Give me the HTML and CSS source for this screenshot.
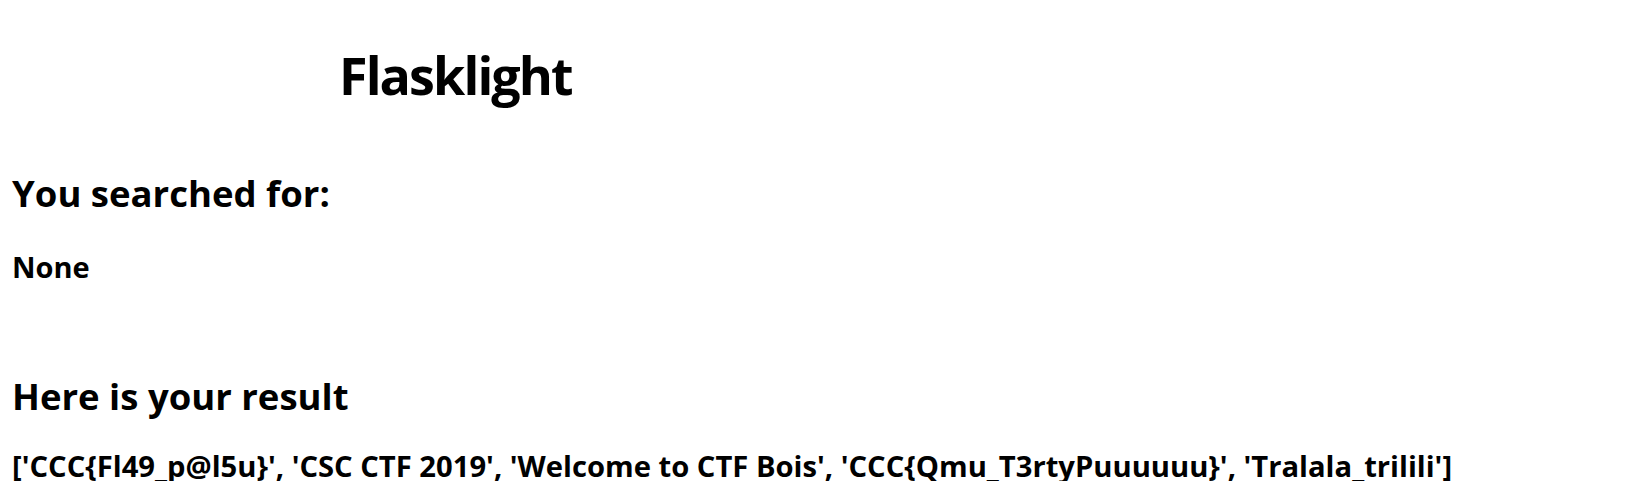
FILE: index.html
```html
<!DOCTYPE html>
<html>
<head>
<meta charset="utf-8">
<title>Flasklight</title>
<link rel="stylesheet" href="styles.css">
</head>
<body>
<main class="page">
  <h1 class="title">Flasklight</h1>
  <h2 class="heading searched">You searched for:</h2>
  <h3 class="value">None</h3>
  <h2 class="heading result">Here is your result</h2>
  <h3 class="list">['CCC{Fl49_p@l5u}', 'CSC CTF 2019', 'Welcome to CTF Bois', 'CCC{Qmu_T3rtyPuuuuuu}', 'Tralala_trilili']</h3>
</main>
</body>
</html>
```
FILE: styles.css
```css
html, body {
  margin: 0;
  padding: 0;
  background: #ffffff;
}
body {
  font-family: "Open Sans", "Noto Sans", sans-serif;
  font-weight: 700;
  color: #000000;
}
.page {
  display: flex;
  flex-direction: column;
  align-items: flex-start;
  padding: 49px 0 0 12px;
}
.page h1, .page h2, .page h3 {
  margin: 0;
  font-weight: 700;
}
.title {
  font-size: 52px;
  line-height: 52px;
  height: 52px;
  letter-spacing: -1.9px;
  margin-left: 327px !important;
}
.heading {
  font-size: 36.5px;
  line-height: 36.5px;
  height: 36.5px;
}
.searched {
  margin-top: 73.6px !important;
}
.value {
  font-size: 29px;
  line-height: 29px;
  height: 29px;
  margin-top: 41px !important;
}
.result {
  margin-top: 96.5px !important;
}
.list {
  font-size: 29.2px;
  line-height: 29px;
  height: 29px;
  margin-top: 38px !important;
  white-space: nowrap;
}
```
